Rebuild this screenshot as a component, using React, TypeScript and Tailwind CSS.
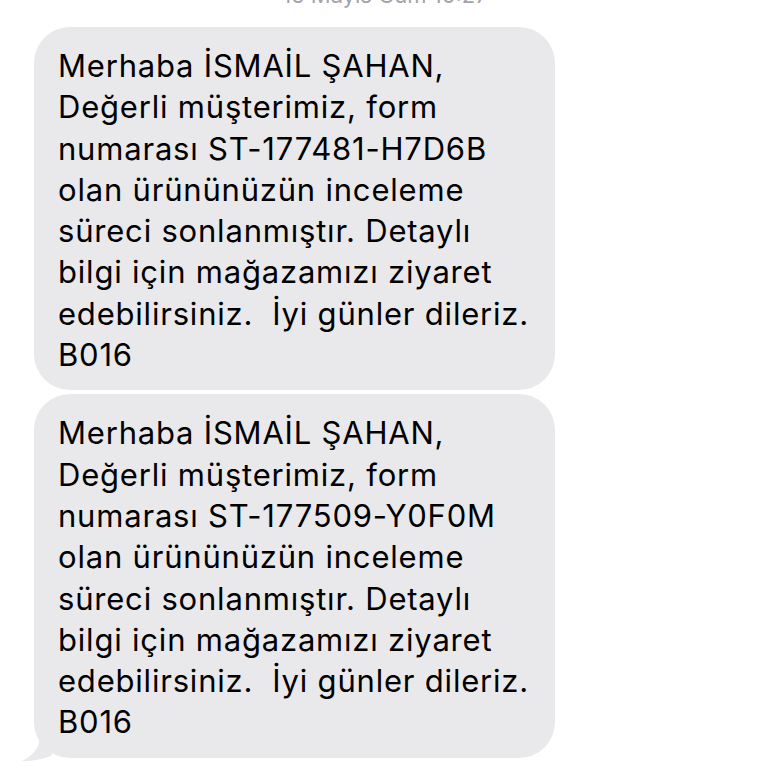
const lines1 = [
  'Merhaba İSMAİL ŞAHAN,',
  'Değerli müşterimiz, form',
  'numarası ST-177481-H7D6B',
  'olan ürününüzün inceleme',
  'süreci sonlanmıştır. Detaylı',
  'bilgi için mağazamızı ziyaret',
  'edebilirsiniz.  İyi günler dileriz.',
  'B016',
];

const lines2 = [
  'Merhaba İSMAİL ŞAHAN,',
  'Değerli müşterimiz, form',
  'numarası ST-177509-Y0F0M',
  'olan ürününüzün inceleme',
  'süreci sonlanmıştır. Detaylı',
  'bilgi için mağazamızı ziyaret',
  'edebilirsiniz.  İyi günler dileriz.',
  'B016',
];

const Bubble = ({ lines, tail }: { lines: string[]; tail?: boolean }) => (
  <div className="relative w-[521px] rounded-[36px] bg-[#e9e9eb] pl-[24px] pr-4 pt-[18px] pb-[15px]">
    {tail && (
      <svg className="absolute left-[-12px] bottom-[-3px]" width="34" height="26" viewBox="0 0 34 26">
        <path d="M18 0 C18 12 12 20 0 26 C12 26 22 24 30 20 L34 0 Z" fill="#e9e9eb" />
      </svg>
    )}
    {lines.map((l, i) => (
      <div key={i} className="relative whitespace-pre text-[31px] leading-[41.3px] tracking-[0.8px] text-black">
        {l}
      </div>
    ))}
  </div>
);

export default function App() {
  return (
    <div className="h-[768px] w-[768px] overflow-hidden bg-white" style={{ fontFamily: 'Inter, "Liberation Sans", Arial, sans-serif' }}>
      <div className="mt-[-16px] text-center text-[22px] leading-[22px] text-[#a3a3a8] pl-[2px]">15 Mayıs Cum 10:27</div>
      <div className="flex flex-col gap-[4px] pl-[34px] pt-[21px]">
        <Bubble lines={lines1} />
        <Bubble lines={lines2} tail />
      </div>
    </div>
  );
}
